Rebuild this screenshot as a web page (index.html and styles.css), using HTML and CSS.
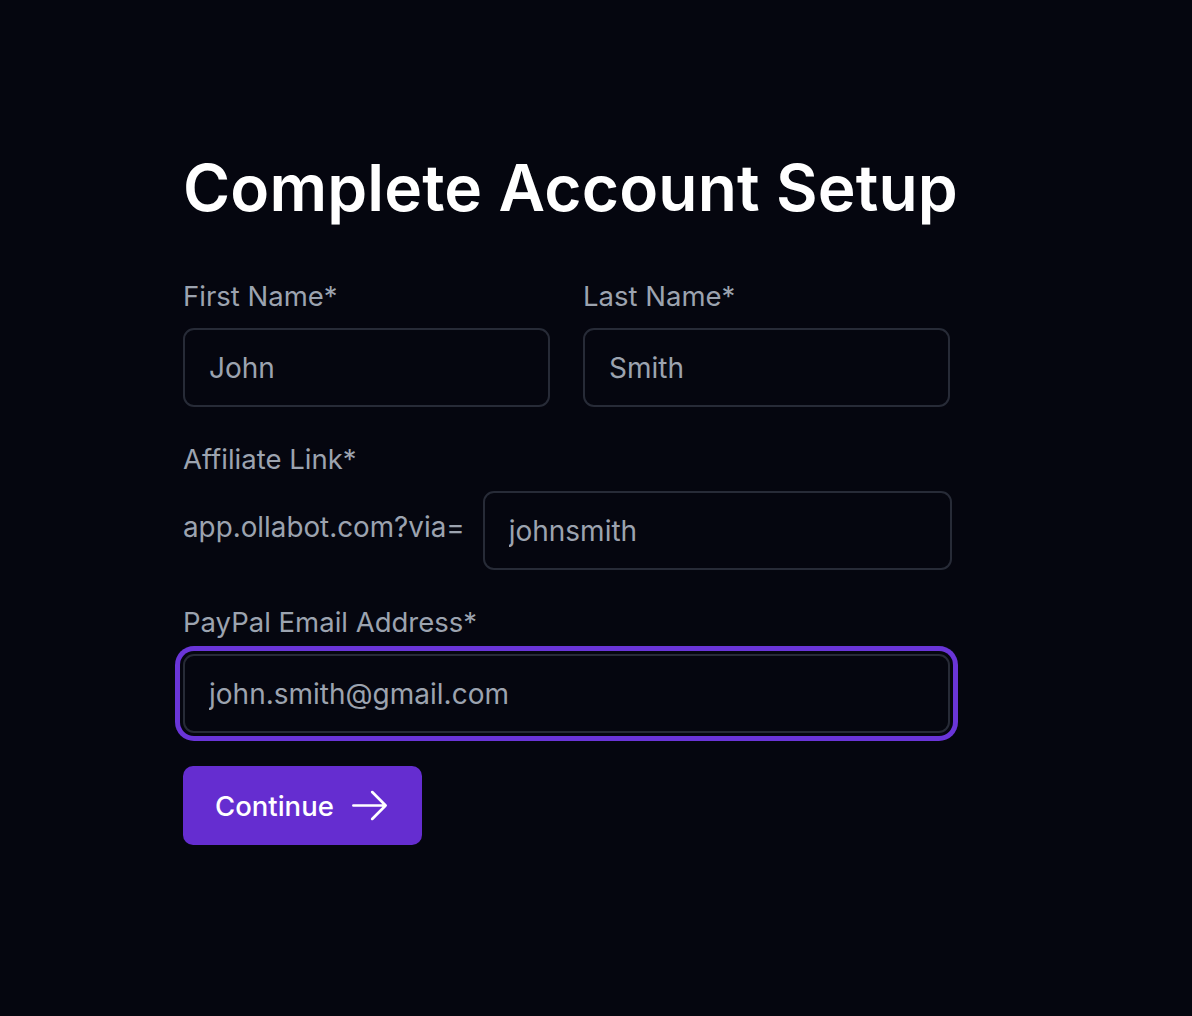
FILE: index.html
```html
<!DOCTYPE html>
<html lang="en">
<head>
<meta charset="utf-8">
<title>Complete Account Setup</title>
<link rel="stylesheet" href="styles.css">
</head>
<body>
<main class="page">
  <h1 class="title">Complete Account Setup</h1>
  <form class="form">
    <div class="row two">
      <div class="field">
        <label class="label" for="first">First Name*</label>
        <input class="input" id="first" type="text" value="John">
      </div>
      <div class="field">
        <label class="label" for="last">Last Name*</label>
        <input class="input" id="last" type="text" value="Smith">
      </div>
    </div>
    <div class="field">
      <label class="label" for="aff">Affiliate Link*</label>
      <div class="prefix-row">
        <span class="prefix">app.ollabot.com?via=</span>
        <input class="input grow" id="aff" type="text" value="johnsmith">
      </div>
    </div>
    <div class="field">
      <label class="label" for="email">PayPal Email Address*</label>
      <input class="input focus" id="email" type="email" value="john.smith@gmail.com">
    </div>
    <div class="actions">
      <button class="btn" type="button">Continue
        <svg class="arrow" viewBox="0 0 24 24" fill="none" stroke="currentColor" stroke-width="1.5" stroke-linecap="round" stroke-linejoin="round"><path d="M13.5 4.5 21 12m0 0-7.5 7.5M21 12H3"/></svg>
      </button>
    </div>
  </form>
</main>
</body>
</html>
```
FILE: styles.css
```css
* { box-sizing: border-box; }
html, body { margin: 0; padding: 0; }
body {
  background: #05060f;
  font-family: Inter, "Noto Sans", sans-serif;
  color: #9ca3af;
  min-height: 1016px;
}
.page {
  width: 776px;
  margin-left: 183px;
  padding-top: 148px;
}
.title {
  margin: 0;
  color: #ffffff;
  font-size: 64px;
  font-weight: 600;
  letter-spacing: 0.15px;
  line-height: 80px;
}
.form {
  margin-top: 52px;
  display: flex;
  flex-direction: column;
  gap: 36px;
  width: 767px;
}
.row.two {
  display: grid;
  grid-template-columns: 1fr 1fr;
  gap: 33px;
}
.field {
  display: flex;
  flex-direction: column;
}
.label {
  font-size: 27.5px;
  line-height: 32px;
  color: #9ca3af;
  margin-bottom: 16px;
}
.input {
  width: 100%;
  height: 79px;
  background: #05060f;
  border: 2px solid #272b37;
  border-radius: 11px;
  padding: 0 24px;
  font-family: Inter, "Noto Sans", sans-serif;
  font-size: 28px;
  color: #9ca3af;
  outline: none;
}
.prefix-row {
  display: flex;
  align-items: center;
  gap: 18px;
}
.prefix {
  font-size: 27.8px;
  color: #9ca3af;
  white-space: nowrap;
  margin-top: -8px;
}
.input.grow {
  flex: 1;
  width: auto;
  min-width: 0;
  margin-right: -2px;
}
.input.focus {
  box-shadow: 0 0 0 3px #05060f, 0 0 0 8px #6a35d8;
}
.actions {
  margin-top: -3px;
}
.btn {
  display: inline-flex;
  align-items: center;
  gap: 14px;
  height: 79px;
  padding: 0 31px 0 32px;
  background: #652dd0;
  color: #ffffff;
  border: none;
  border-radius: 10px;
  font-family: Inter, "Noto Sans", sans-serif;
  font-size: 27.5px;
  font-weight: 500;
}
.arrow {
  width: 43px;
  height: 43px;
}
```
